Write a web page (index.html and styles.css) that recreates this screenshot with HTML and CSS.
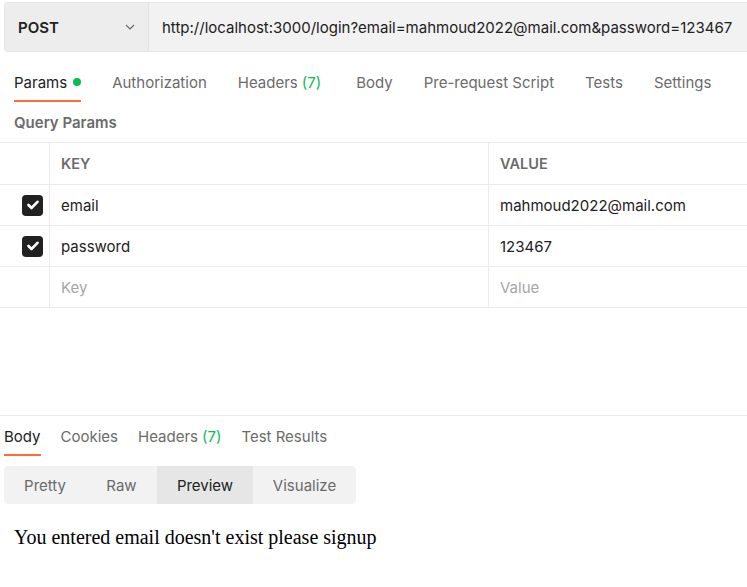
FILE: index.html
```html
<!DOCTYPE html>
<html>
<head>
<meta charset="utf-8">
<link rel="stylesheet" href="styles.css">
</head>
<body>
<div class="app">
  <div class="urlbar">
    <div class="method">
      <span class="method-name">POST</span>
      <svg class="chevron" width="12" height="12" viewBox="0 0 12 12"><path d="M2 4 L6 8 L10 4" fill="none" stroke="#6b6b6b" stroke-width="1.2"/></svg>
    </div>
    <div class="url">http://localhost:3000/login?email=mahmoud2022@mail.com&amp;password=123467</div>
  </div>

  <div class="req-tabs">
    <div class="tab active">Params <span class="dot"></span></div>
    <div class="tab">Authorization</div>
    <div class="tab">Headers <span class="count">(7)</span></div>
    <div class="tab body-tab">Body</div>
    <div class="tab">Pre-request Script</div>
    <div class="tab">Tests</div>
    <div class="tab">Settings</div>
  </div>

  <div class="section-title">Query Params</div>

  <div class="params">
    <div class="row head">
      <div class="cell check"></div>
      <div class="cell key">KEY</div>
      <div class="cell value">VALUE</div>
    </div>
    <div class="row">
      <div class="cell check"><span class="cb"><svg width="12" height="10" viewBox="0 0 12 10"><path d="M1.5 5 L4.5 8 L10.5 1.8" fill="none" stroke="#fff" stroke-width="2.6" stroke-linecap="round" stroke-linejoin="round"/></svg></span></div>
      <div class="cell key">email</div>
      <div class="cell value">mahmoud2022@mail.com</div>
    </div>
    <div class="row">
      <div class="cell check"><span class="cb"><svg width="12" height="10" viewBox="0 0 12 10"><path d="M1.5 5 L4.5 8 L10.5 1.8" fill="none" stroke="#fff" stroke-width="2.6" stroke-linecap="round" stroke-linejoin="round"/></svg></span></div>
      <div class="cell key">password</div>
      <div class="cell value">123467</div>
    </div>
    <div class="row">
      <div class="cell check"></div>
      <div class="cell key placeholder">Key</div>
      <div class="cell value placeholder">Value</div>
    </div>
  </div>

  <div class="spacer"></div>

  <div class="response">
    <div class="res-tabs">
      <div class="tab active">Body</div>
      <div class="tab">Cookies</div>
      <div class="tab">Headers <span class="count">(7)</span></div>
      <div class="tab">Test Results</div>
    </div>
    <div class="segmented">
      <div class="seg seg-pretty">Pretty</div>
      <div class="seg seg-raw">Raw</div>
      <div class="seg seg-preview selected">Preview</div>
      <div class="seg seg-visualize">Visualize</div>
    </div>
    <div class="preview-text">You entered email doesn't exist please signup</div>
  </div>
</div>
</body>
</html>
```

FILE: styles.css
```css
* { box-sizing: border-box; }
html, body { margin: 0; padding: 0; background: #fff; }
body {
  font-family: Inter, "Noto Sans", "Liberation Sans", sans-serif;
  font-size: 15px;
  color: #212121;
  width: 747px;
  height: 587px;
  overflow: hidden;
}
.app { padding-top: 2px; }

.urlbar {
  display: flex;
  height: 50px;
  margin-left: 4px;
  border: 1px solid #e6e6e6;
  border-right: none;
  border-radius: 4px 0 0 4px;
  background: #f2f2f2;
}
.method {
  width: 144px;
  display: flex;
  align-items: center;
  justify-content: space-between;
  padding: 0 12px 0 13px;
  background: #ededed;
  border-right: 1px solid #e3e3e3;
  border-radius: 4px 0 0 4px;
}
.method-name { font-weight: 600; font-size: 15px; color: #212121; }
.url {
  display: flex;
  align-items: center;
  padding-left: 13px;
  font-size: 15px;
  color: #212121;
  white-space: nowrap;
}

.req-tabs {
  display: flex;
  gap: 31px;
  padding-left: 14px;
  height: 50px;
}
.tab {
  position: relative;
  display: flex;
  align-items: center;
  height: 100%;
  color: #6b6b6b;
  font-size: 15px;
  white-space: nowrap;
}
.req-tabs .tab { padding-top: 10px; }
.tab .count { color: #0cbb52; margin-left: 4px; }
.tab.active { color: #212121; }
.req-tabs .tab.active::after,
.res-tabs .tab.active::after {
  content: "";
  position: absolute;
  left: 0; right: 0;
  bottom: 0;
  height: 2px;
  background: #ff6c37;
}
.body-tab { margin-left: 4px; }
.dot {
  display: inline-block;
  width: 8px; height: 8px;
  border-radius: 50%;
  background: #0cbb52;
  margin-left: 6px;
}

.section-title {
  padding-left: 14px;
  font-weight: 600;
  font-size: 15px;
  color: #6b6b6b;
  height: 40px;
  line-height: 42px;
}

.params { border-top: 1px solid #ebebeb; }
.row {
  display: flex;
  height: 41px;
  border-bottom: 1px solid #ebebeb;
}
.row.head { height: 42px; }
.cell {
  display: flex;
  align-items: center;
  font-size: 15px;
  color: #212121;
}
.cell.check {
  width: 50px;
  border-right: 1px solid #ebebeb;
  justify-content: flex-end;
  padding-right: 6px;
}
.cell.key {
  width: 439px;
  border-right: 1px solid #ebebeb;
  padding-left: 11px;
}
.cell.value { flex: 1; padding-left: 11px; }
.row.head .cell { font-weight: 600; color: #6b6b6b; font-size: 14.5px; }
.placeholder { color: #a6a6a6 !important; }
.cb {
  width: 21px; height: 21px;
  border-radius: 4px;
  background: #212121;
  display: flex;
  align-items: center;
  justify-content: center;
}

.spacer { height: 108px; border-bottom: 1px solid #ebebeb; }

.res-tabs {
  display: flex;
  gap: 20px;
  padding-left: 4px;
  height: 40px;
}
.res-tabs .tab { padding-top: 0; }

.segmented {
  display: flex;
  margin: 10px 0 0 4px;
  width: 352px;
  height: 38px;
  background: #f2f2f2;
  border-radius: 4px;
  overflow: hidden;
}
.seg {
  display: flex;
  align-items: center;
  justify-content: center;
  font-size: 15px;
  color: #6b6b6b;
}
.seg-pretty { width: 82px; }
.seg-raw { width: 71px; }
.seg-preview { width: 96px; }
.seg-visualize { width: 103px; }
.seg.selected { background: #e6e6e6; color: #212121; }

.preview-text {
  font-family: "Liberation Serif", "Times New Roman", serif;
  font-size: 20px;
  color: #000;
  padding: 22px 0 0 14px;
}
```
